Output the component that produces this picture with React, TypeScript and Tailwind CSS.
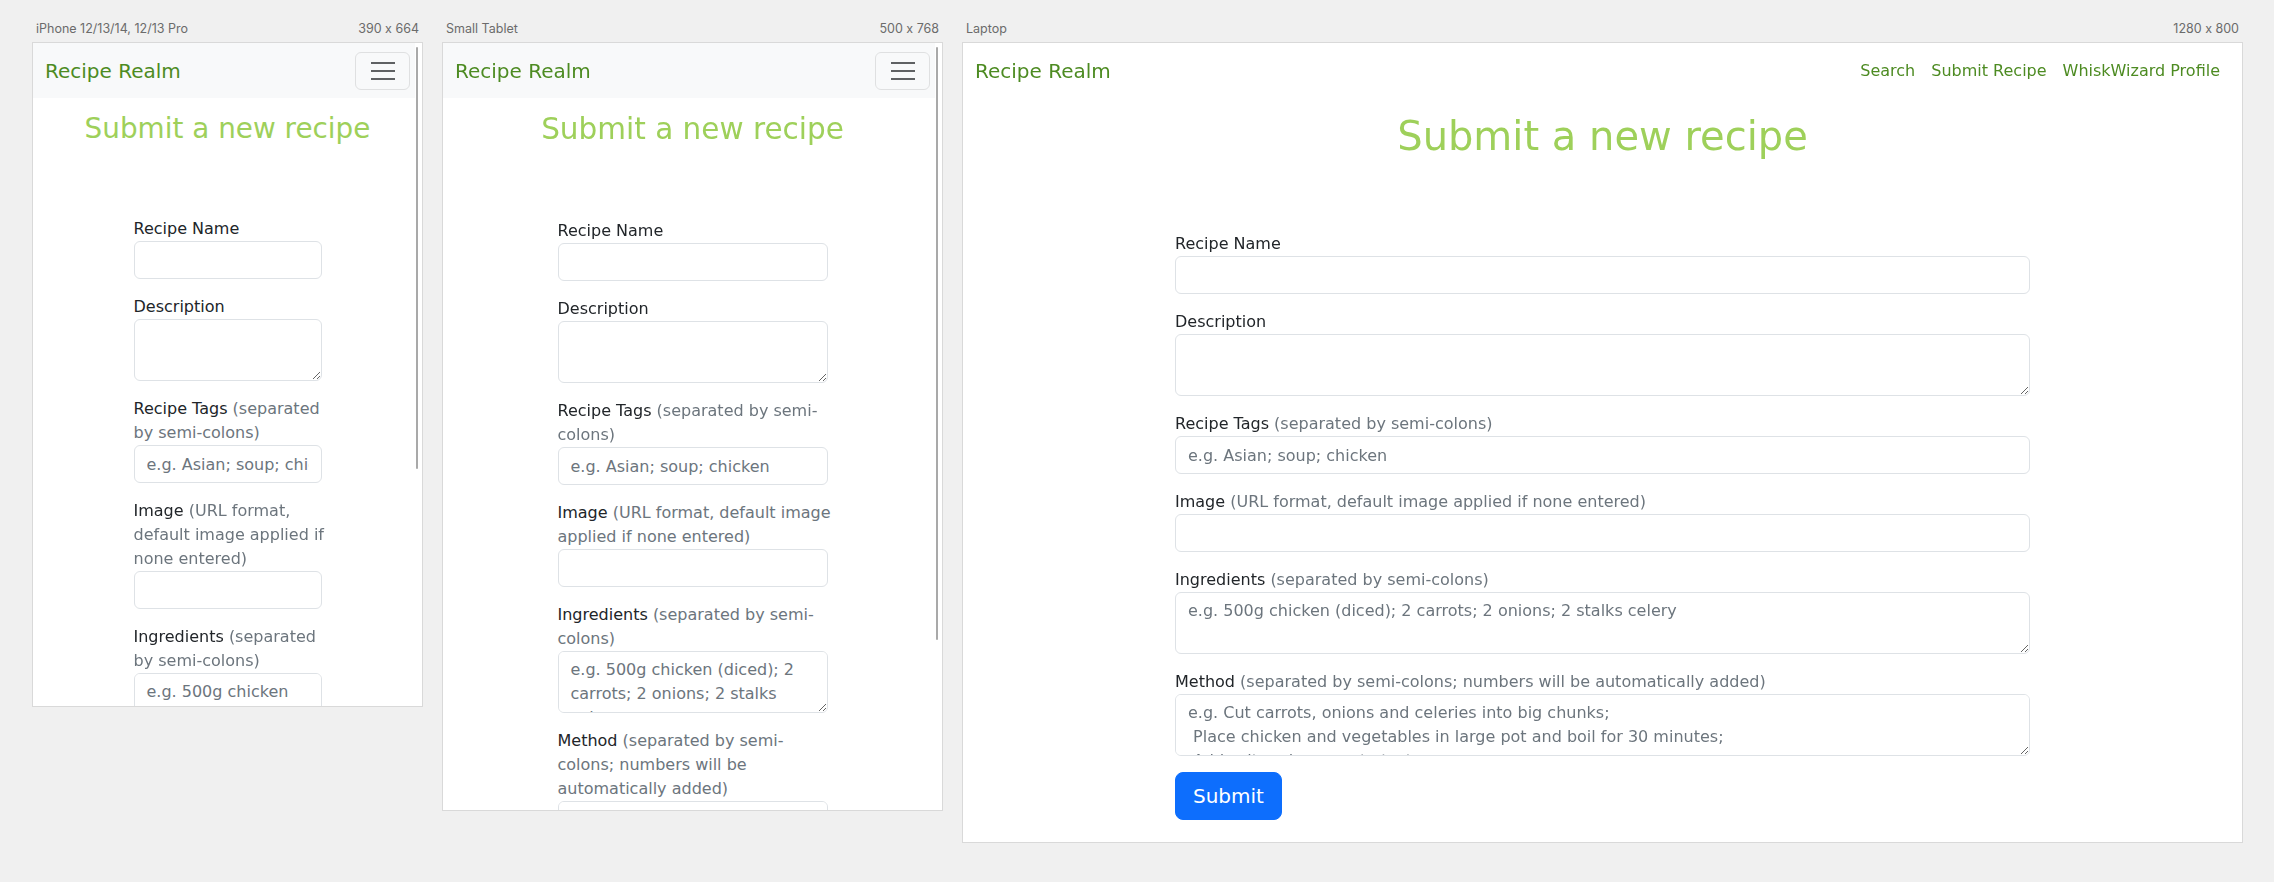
import React from 'react';

type Variant = 'phone' | 'tablet' | 'laptop';

type Field = {
  id: string;
  name: string;
  kind: 'input' | 'textarea';
  placeholder?: string;
};

const FIELDS: Field[] = [
  { id: 'name', name: 'Recipe Name', kind: 'input' },
  { id: 'description', name: 'Description', kind: 'textarea' },
  { id: 'tags', name: 'Recipe Tags', kind: 'input', placeholder: 'e.g. Asian; soup; chicken' },
  { id: 'image', name: 'Image', kind: 'input' },
  {
    id: 'ingredients',
    name: 'Ingredients',
    kind: 'textarea',
    placeholder: 'e.g. 500g chicken (diced); 2 carrots; 2 onions; 2 stalks celery',
  },
  {
    id: 'method',
    name: 'Method',
    kind: 'textarea',
    placeholder:
      'e.g. Cut carrots, onions and celeries into big chunks;\n Place chicken and vegetables in large pot and boil for 30 minutes;\n Add salt and pepper to taste',
  },
];

// label hints, already broken into the lines each viewport shows
const HINTS: Record<Variant, Record<string, string[]>> = {
  phone: {
    tags: ['(separated', 'by semi-colons)'],
    image: ['(URL format,', 'default image applied if', 'none entered)'],
    ingredients: ['(separated', 'by semi-colons)'],
    method: ['(separated', 'by semi-colons; numbers', 'will be automatically', 'added)'],
  },
  tablet: {
    tags: ['(separated by semi-', 'colons)'],
    image: ['(URL format, default image', 'applied if none entered)'],
    ingredients: ['(separated by semi-', 'colons)'],
    method: ['(separated by semi-', 'colons; numbers will be', 'automatically added)'],
  },
  laptop: {
    tags: ['(separated by semi-colons)'],
    image: ['(URL format, default image applied if none entered)'],
    ingredients: ['(separated by semi-colons)'],
    method: ['(separated by semi-colons; numbers will be automatically added)'],
  },
};

const FRAMES = [
  {
    variant: 'phone' as Variant,
    label: 'iPhone 12/13/14, 12/13 Pro',
    size: '390 x 664',
    box: 'w-[391px] h-[665px]',
    heading: 'text-[27.85px]',
    form: 'w-[188px]',
    thumb: 'h-[422px]',
  },
  {
    variant: 'tablet' as Variant,
    label: 'Small Tablet',
    size: '500 x 768',
    box: 'w-[501px] h-[769px]',
    heading: 'text-[29.5px]',
    form: 'w-[270px]',
    thumb: 'h-[593px]',
  },
  {
    variant: 'laptop' as Variant,
    label: 'Laptop',
    size: '1280 x 800',
    box: 'w-[1281px] h-[801px]',
    heading: 'text-[40px]',
    form: 'w-[855px]',
    thumb: '',
  },
];

const Navbar: React.FC<{ variant: Variant }> = ({ variant }) => {
  if (variant === 'laptop') {
    return (
      <nav className="flex h-[55px] items-center justify-between bg-white pl-[12px] pr-[22px]">
        <span className="text-[20px] leading-[30px] text-[#4d8b22]">Recipe Realm</span>
        <div className="flex gap-[16px] text-[16px] leading-[24px] text-[#4d8b22]">
          <span>Search</span>
          <span>Submit Recipe</span>
          <span>WhiskWizard Profile</span>
        </div>
      </nav>
    );
  }
  return (
    <nav className="flex h-[55px] items-center justify-between bg-[#f8f9fa] px-[12px]">
      <span className="text-[20px] leading-[30px] text-[#4d8b22]">Recipe Realm</span>
      <button className="flex h-[38px] w-[55px] flex-col items-center justify-center gap-[6px] rounded-[6px] border border-[#dfe0e1]">
        <span className="h-[2px] w-[24px] bg-[#5f6163]" />
        <span className="h-[2px] w-[24px] bg-[#5f6163]" />
        <span className="h-[2px] w-[24px] bg-[#5f6163]" />
      </button>
    </nav>
  );
};

const FormField: React.FC<{ field: Field; hint: string[] }> = ({ field, hint }) => {
  const control =
    'block w-full rounded-[6px] border border-[#dee2e6] bg-white px-[12px] text-[16px] text-[#212529] placeholder:text-[#6c757d] outline-none';
  return (
    <div className="mb-[16px]">
      <label className="block whitespace-nowrap text-[16px] leading-[24px] text-[#212529]">
        {field.name}
        {hint.length > 0 && ' '}
        {hint.map((line, i) => (
          <React.Fragment key={i}>
            {i > 0 && <br />}
            <span className="text-[#6c757d]">{line}</span>
          </React.Fragment>
        ))}
      </label>
      {field.kind === 'input' ? (
        <input className={`${control} h-[38px]`} placeholder={field.placeholder} />
      ) : (
        <textarea
          className={`${control} h-[62px] resize-y py-[6px] leading-[24px]`}
          placeholder={field.placeholder}
        />
      )}
    </div>
  );
};

const Frame: React.FC<(typeof FRAMES)[number]> = ({ variant, label, size, box, heading, form, thumb }) => (
  <div className="flex shrink-0 flex-col">
    <div className="flex h-[23px] justify-between px-[4px] font-['Inter',sans-serif] text-[12.5px] leading-[20px] text-[#6b6b6b] [font-feature-settings:'calt'_0]">
      <span>{label}</span>
      <span>{size}</span>
    </div>
    <div className={`relative overflow-hidden border border-[#d9d9d9] bg-white ${box}`}>
      <Navbar variant={variant} />
      <h1 className={`mt-[14px] text-center font-normal leading-[1.2] text-[#9ed05a] ${heading}`}>
        Submit a new recipe
      </h1>
      <form className={`mx-auto mt-[72px] ${form}`}>
        {FIELDS.map((f) => (
          <FormField key={f.id} field={f} hint={HINTS[variant][f.id] ?? []} />
        ))}
        <button
          type="button"
          className="rounded-[8px] border border-[#0d6efd] bg-[#0d6efd] px-[17px] py-[8px] text-[20px] leading-[30px] text-white"
        >
          Submit
        </button>
      </form>
      {variant !== 'laptop' && (
        <div className="absolute right-0 top-0 h-full w-[7px] bg-white">
          <div className={`absolute left-[1px] top-[4px] w-[2px] rounded-full bg-[#a9a9a9] ${thumb}`} />
        </div>
      )}
    </div>
  </div>
);

export default function App() {
  return (
    <div className="flex min-h-[882px] items-start gap-[19px] bg-[#f0f0f0] pl-[32px] pt-[19px] font-['DejaVu_Sans',sans-serif]">
      {FRAMES.map((f) => (
        <Frame key={f.variant} {...f} />
      ))}
    </div>
  );
}
